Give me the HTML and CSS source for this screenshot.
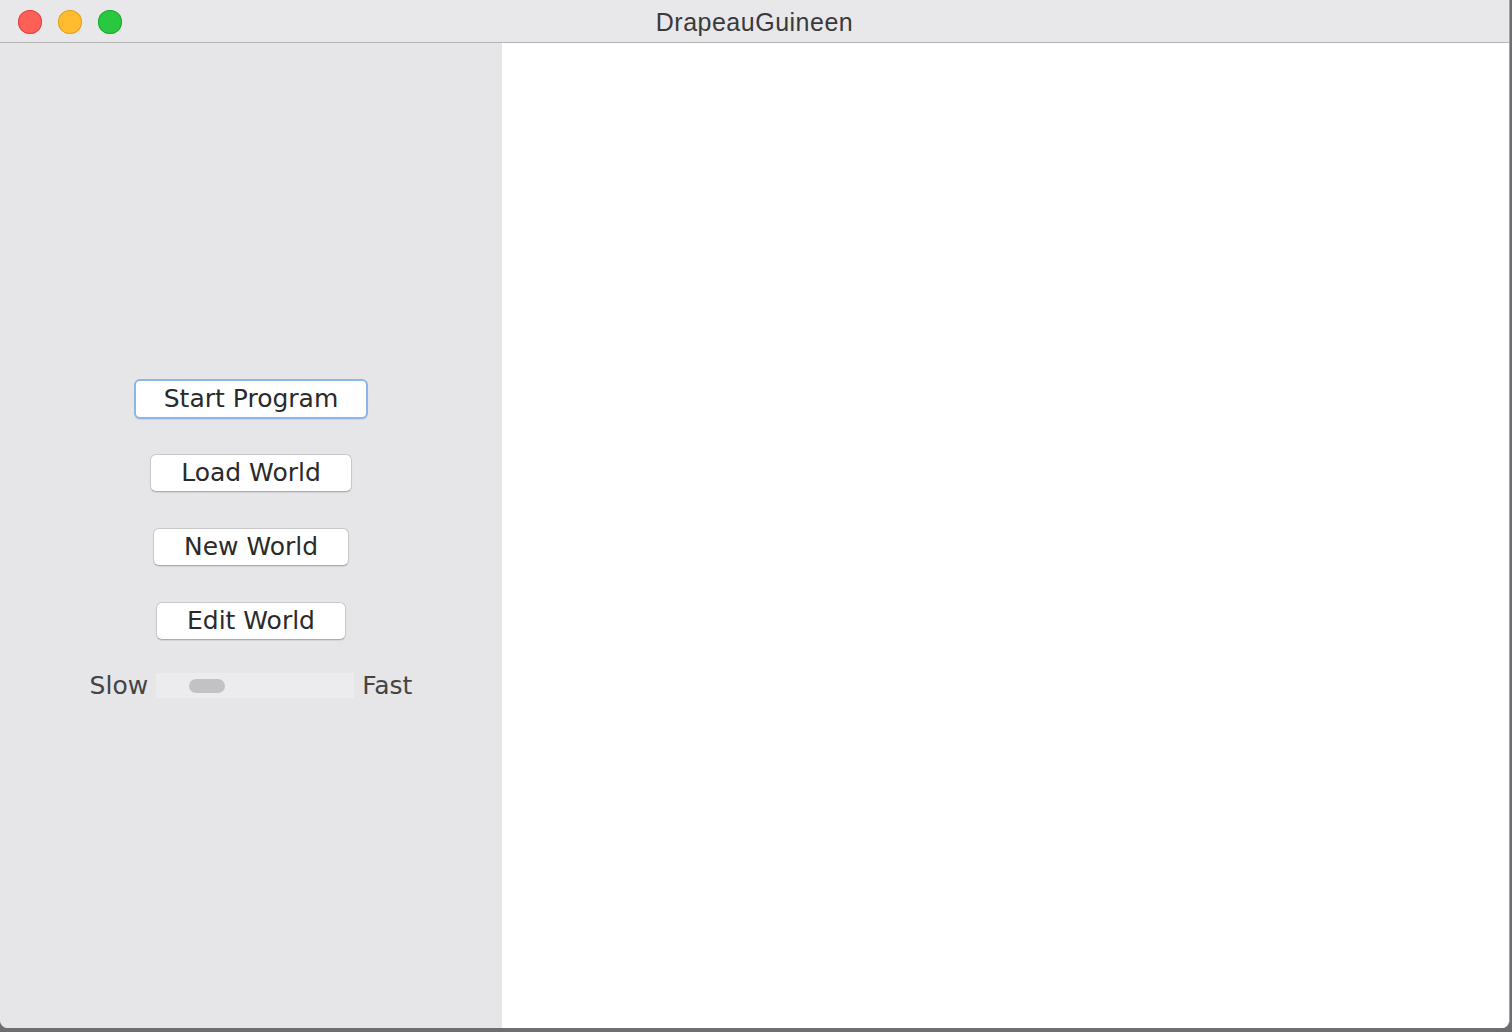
FILE: index.html
```html
<!DOCTYPE html>
<html>
<head>
<meta charset="utf-8">
<title>DrapeauGuineen</title>
<link rel="stylesheet" href="styles.css">
</head>
<body>
<div class="window">
  <div class="titlebar">
    <div class="lights">
      <span class="light red"></span>
      <span class="light yellow"></span>
      <span class="light green"></span>
    </div>
    <div class="title">DrapeauGuineen</div>
  </div>
  <div class="content">
    <div class="sidebar">
      <button class="btn btn-default">Start Program</button>
      <button class="btn">Load World</button>
      <button class="btn">New World</button>
      <button class="btn">Edit World</button>
      <div class="speed">
        <span class="speed-label">Slow</span>
        <div class="track"><div class="thumb"></div></div>
        <span class="speed-label">Fast</span>
      </div>
    </div>
    <div class="canvas"></div>
  </div>
</div>
</body>
</html>
```

FILE: styles.css
```css
html, body {
  margin: 0;
  padding: 0;
  width: 1512px;
  height: 1032px;
  overflow: hidden;
  background: #6e6e70;
}

.window {
  width: 1509px;
  height: 1028px;
  display: flex;
  flex-direction: column;
  background: #e7e7e9;
  border-right: 1px solid #a3a3a5;
  border-radius: 0 0 8px 8px;
  overflow: hidden;
  font-family: "DejaVu Sans", "Liberation Sans", sans-serif;
}

.titlebar {
  height: 42px;
  flex: 0 0 42px;
  border-bottom: 1px solid #b5b5b7;
  background: #e8e8ea;
  display: flex;
  align-items: center;
  position: relative;
}

.lights {
  display: flex;
  gap: 16px;
  padding-left: 18px;
  padding-top: 2px;
}

.light {
  width: 24px;
  height: 24px;
  border-radius: 50%;
  display: block;
}

.red { background: #fe5f57; box-shadow: inset 0 0 0 1px #e0443e; }
.yellow { background: #febc2e; box-shadow: inset 0 0 0 1px #dea123; }
.green { background: #29c840; box-shadow: inset 0 0 0 1px #1aab29; }

.title {
  position: absolute;
  left: 0;
  right: 0;
  top: 0;
  bottom: 0;
  display: flex;
  align-items: center;
  justify-content: center;
  padding-top: 3px;
  font-family: "Liberation Sans", Arial, sans-serif;
  font-size: 25px;
  letter-spacing: 0.5px;
  color: #3a3a3a;
}

.content {
  flex: 1;
  display: flex;
}

.sidebar {
  width: 502px;
  flex: 0 0 502px;
  background: #e6e6e8;
  display: flex;
  flex-direction: column;
  align-items: center;
  padding-top: 336px;
  box-sizing: border-box;
}

.btn {
  height: 38px;
  padding: 0 30px;
  margin-bottom: 36px;
  background: #ffffff;
  border: 1px solid #c8c8ca;
  border-bottom-color: #acacae;
  border-radius: 6px;
  font-family: "DejaVu Sans", "Liberation Sans", sans-serif;
  font-size: 25px;
  color: #2a2a2a;
  line-height: 36px;
  box-shadow: 0 1px 1px rgba(0,0,0,0.08);
}

.btn-default {
  height: 40px;
  padding: 0 28px;
  margin-bottom: 35px;
  border: 2px solid #8ab6ea;
  line-height: 36px;
}

.speed {
  display: flex;
  align-items: center;
  gap: 8px;
  margin-top: -5px;
}

.speed-label {
  font-size: 25px;
  color: #444;
}

.track {
  width: 198px;
  height: 25px;
  background: #ececee;
  position: relative;
}

.thumb {
  position: absolute;
  left: 33px;
  top: 6px;
  width: 36px;
  height: 14px;
  border-radius: 7px;
  background: #c2c2c4;
}

.canvas {
  flex: 1;
  background: #ffffff;
}
```
